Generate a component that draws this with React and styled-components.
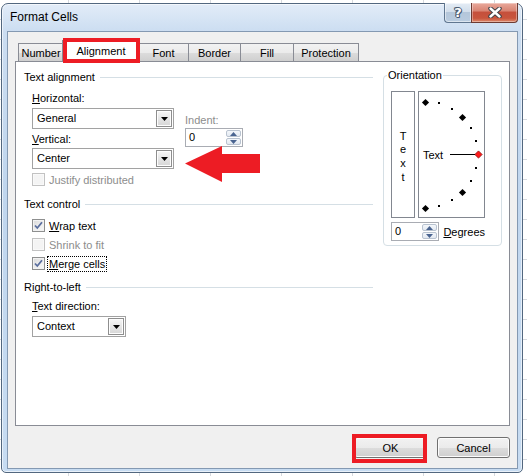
import React from 'react';
import styled, { createGlobalStyle } from 'styled-components';

const tabs = [
  { label: 'Number', width: 46 },
  { label: 'Alignment', width: 78, active: true },
  { label: 'Font', width: 51 },
  { label: 'Border', width: 53 },
  { label: 'Fill', width: 54 },
  { label: 'Protection', width: 66 },
];

// dial marks, angle in degrees from the horizontal
const SMALL_MARKS = [75, 60, 30, 15, -15, -30, -60, -75];
const BIG_MARKS = [90, 45, -45, -90];

const dialPoint = (deg) => {
  const r = (deg * Math.PI) / 180;
  return [6 + 53 * Math.cos(r), 62.5 - 53 * Math.sin(r)];
};

const diamond = (x, y, s) => `${x},${y - s} ${x + s},${y} ${x},${y + s} ${x - s},${y}`;

const Combo = ({ width, value }) => (
  <ComboBox $width={width}>
    <ComboValue>{value}</ComboValue>
    <DropButton>
      <svg width="7" height="4" viewBox="0 0 7 4">
        <path d="M0 0h7L3.5 4z" fill="#000" />
      </svg>
    </DropButton>
  </ComboBox>
);

const Spin = ({ width, value }) => (
  <SpinBox $width={width}>
    <SpinValue>{value}</SpinValue>
    <SpinButtons>
      <SpinButton>
        <svg width="7" height="4" viewBox="0 0 7 4">
          <path d="M0 4h7L3.5 0z" fill="#4a6490" />
        </svg>
      </SpinButton>
      <SpinButton>
        <svg width="7" height="4" viewBox="0 0 7 4">
          <path d="M0 0h7L3.5 4z" fill="#4a6490" />
        </svg>
      </SpinButton>
    </SpinButtons>
  </SpinBox>
);

const Check = ({ checked, disabled, focused, children }) => (
  <CheckRow $disabled={disabled}>
    <CheckBox $disabled={disabled}>
      {checked && (
        <svg width="11" height="11" viewBox="0 0 11 11">
          <path d="M2 5.5 L4.3 8 L9 2.3" fill="none" stroke="#5a6e9e" strokeWidth="1.8" />
        </svg>
      )}
    </CheckBox>
    <CheckLabel $focused={focused}>{children}</CheckLabel>
  </CheckRow>
);

const App = () => {
  return (
    <>
      <GlobalStyle />
      <Frame>
        <TitleBar>
          <Caption>Format Cells</Caption>
          <CaptionButtons>
            <HelpButton>?</HelpButton>
            <CloseButton>
              <svg width="14" height="11" viewBox="0 0 14 11">
                <path d="M2.5 1.5 L11.5 9.5 M11.5 1.5 L2.5 9.5" stroke="#3b3f46" strokeWidth="4.4" strokeLinecap="round" />
                <path d="M2.5 1.5 L11.5 9.5 M11.5 1.5 L2.5 9.5" stroke="#fff" strokeWidth="2.4" strokeLinecap="round" />
              </svg>
            </CloseButton>
          </CaptionButtons>
        </TitleBar>

        <Client>
          <TabStrip>
            {tabs.map((tab) => (
              <Tab key={tab.label} $width={tab.width} $active={tab.active}>
                {tab.label}
                {tab.active && <TabMark />}
              </Tab>
            ))}
          </TabStrip>

          <Panel>
            <LeftCol>
              <GroupTitle>Text alignment</GroupTitle>
              <AlignRow>
                <AlignStack>
                  <Label>
                    <u>H</u>orizontal:
                  </Label>
                  <Gap $h={3} />
                  <Combo width={142} value="General" />
                  <Gap $h={3} />
                  <Label>
                    <u>V</u>ertical:
                  </Label>
                  <Gap $h={2} />
                  <Combo width={142} value="Center" />
                </AlignStack>
                <IndentStack>
                  <Label $disabled>Indent:</Label>
                  <Gap $h={1} />
                  <Spin width={58} value="0" />
                </IndentStack>
              </AlignRow>
              <Gap $h={1} />
              <Indented>
                <Check disabled>Justify distributed</Check>
              </Indented>

              <Gap $h={8} />
              <GroupTitle>Text control</GroupTitle>
              <Gap $h={5} />
              <Indented>
                <Check checked>
                  <u>W</u>rap text
                </Check>
                <Check disabled>Shrink to fit</Check>
                <Check checked focused>
                  <u>M</u>erge cells
                </Check>
              </Indented>

              <Gap $h={7} />
              <GroupTitle>Right-to-left</GroupTitle>
              <Gap $h={5} />
              <Indented>
                <Label>
                  <u>T</u>ext direction:
                </Label>
                <Gap $h={3} />
                <Combo width={94} value="Context" />
              </Indented>
            </LeftCol>

            <GroupBox>
              <GroupLegend>Orientation</GroupLegend>
              <OrientRow>
                <VerticalText>
                  <span>T</span>
                  <span>e</span>
                  <span>x</span>
                  <span>t</span>
                </VerticalText>
                <Dial>
                  <svg width="65" height="125" viewBox="0 0 65 125">
                    {SMALL_MARKS.map((deg) => {
                      const [x, y] = dialPoint(deg);
                      return <rect key={deg} x={Math.round(x) - 1} y={Math.round(y) - 1} width="2" height="2" fill="#000" />;
                    })}
                    {BIG_MARKS.map((deg) => {
                      const [x, y] = dialPoint(deg);
                      return <polygon key={deg} points={diamond(Math.round(x) + 0.5, Math.round(y) + 0.5, 3.6)} fill="#000" />;
                    })}
                    <polygon points={diamond(59.5, 62.5, 3.6)} fill="#ff1a1a" stroke="#8a0000" strokeWidth="0.8" />
                    <text x="4" y="67" fontFamily="Liberation Sans, Arial, sans-serif" fontSize="11" fill="#000">
                      Text
                    </text>
                    <rect x="31" y="62" width="25" height="1" fill="#000" />
                  </svg>
                </Dial>
              </OrientRow>
              <DegreeRow>
                <Spin width={58} value="0" />
                <Label>
                  <u>D</u>egrees
                </Label>
              </DegreeRow>
            </GroupBox>

            <Arrow width="75" height="36" viewBox="0 0 75 36">
              <polygon points="0,17.5 37,0 37,8 75,8 75,27 37,27 37,36" fill="#ed1c24" />
            </Arrow>
          </Panel>

          <ButtonRow>
            <DialogButton>
              OK
              <ButtonMark />
            </DialogButton>
            <DialogButton>Cancel</DialogButton>
          </ButtonRow>
        </Client>
      </Frame>
    </>
  );
};

const GlobalStyle = createGlobalStyle`
  html, body {
    margin: 0;
    padding: 0;
  }
  body {
    width: 527px;
    height: 476px;
    overflow: hidden;
    font-family: "Liberation Sans", Arial, sans-serif;
    font-size: 11px;
    color: #000;
    background-color: #fff;
    background-image:
      repeating-linear-gradient(90deg, transparent 0, transparent 68px, #d6d9de 68px, #d6d9de 69px, transparent 69px, transparent 71px),
      repeating-linear-gradient(180deg, transparent 0, transparent 19px, #d6d9de 19px, #d6d9de 20px);
  }
`;

const Frame = styled.div`
  box-sizing: border-box;
  width: 522px;
  height: 470px;
  margin: 3px 0 0 1px;
  border: 1px solid #52677f;
  border-radius: 7px 7px 5px 5px;
  background: linear-gradient(180deg, #e2ecf8 0%, #cbddf1 6%, #c0d6ee 40%, #c7dcf2 100%);
  box-shadow: inset 0 0 0 1px rgba(255, 255, 255, 0.6);
  padding: 0 4px 3px 5px;
  display: flex;
  flex-direction: column;
`;

const TitleBar = styled.div`
  display: flex;
  align-items: flex-start;
  height: 27px;
`;

const Caption = styled.div`
  padding: 6px 0 0 3px;
  font-size: 12px;
  line-height: 14px;
  color: #000;
`;

const CaptionButtons = styled.div`
  display: flex;
  margin: -1px 0 0 auto;
`;

const HelpButton = styled.div`
  box-sizing: border-box;
  width: 27px;
  height: 20px;
  border: 1px solid #5f7690;
  border-top: none;
  border-right: none;
  border-radius: 0 0 0 4px;
  background: linear-gradient(180deg, #e4ecf5 0%, #d2deeb 45%, #b4c6da 50%, #b9cce0 100%);
  box-shadow: inset 0 0 0 1px rgba(255, 255, 255, 0.5);
  display: flex;
  justify-content: center;
  align-items: center;
  font-family: "DejaVu Sans", sans-serif;
  font-weight: bold;
  font-size: 13px;
  line-height: 13px;
  color: #fff;
  text-shadow: 1px 0 0 #4c5d72, -1px 0 0 #4c5d72, 0 1px 0 #4c5d72, 0 -1px 0 #4c5d72, 1px 1px 0 #4c5d72, -1px -1px 0 #4c5d72;
`;

const CloseButton = styled.div`
  box-sizing: border-box;
  width: 47px;
  height: 20px;
  border: 1px solid #6d3b33;
  border-top: none;
  border-radius: 0 0 4px 0;
  background: linear-gradient(180deg, #e9a99c 0%, #d98675 40%, #c5503c 50%, #c8553d 80%, #de8a6c 100%);
  box-shadow: inset 0 0 0 1px rgba(255, 255, 255, 0.35);
  display: flex;
  justify-content: center;
  align-items: center;
`;

const Client = styled.div`
  box-sizing: border-box;
  height: 438px;
  border: 1px solid #8499b2;
  background: #f0f0f0;
  padding: 8px 7px 10px;
  display: flex;
  flex-direction: column;
`;

const TabStrip = styled.div`
  display: flex;
  align-items: flex-end;
  height: 21px;
  padding-left: 3px;
  position: relative;
  z-index: 1;
`;

const Tab = styled.div`
  box-sizing: border-box;
  position: relative;
  width: ${({ $width }) => $width}px;
  height: ${({ $active }) => ($active ? 22 : 18)}px;
  margin: ${({ $active }) => ($active ? '0 -1px -1px -2px' : '0 0 0 -1px')};
  border: 1px solid #898c95;
  border-bottom: none;
  background: ${({ $active }) =>
    $active ? '#fff' : 'linear-gradient(180deg, #f2f2f2 0%, #ebebeb 50%, #dddddd 50%, #cfcfcf 100%)'};
  z-index: ${({ $active }) => ($active ? 2 : 1)};
  display: flex;
  justify-content: center;
  align-items: center;
  padding-bottom: ${({ $active }) => ($active ? 2 : 0)}px;
  &:first-child {
    margin-left: 0;
  }
`;

const TabMark = styled.span`
  position: absolute;
  top: -3px;
  left: 0px;
  right: -1px;
  bottom: -1px;
  border: 4px solid #ed1c24;
  pointer-events: none;
`;

const Panel = styled.div`
  box-sizing: border-box;
  position: relative;
  height: 365px;
  background: #fff;
  border: 1px solid #898c95;
  padding: 8px 7px 0 8px;
  display: flex;
  gap: 10px;
`;

const LeftCol = styled.div`
  width: 349px;
  display: flex;
  flex-direction: column;
`;

const GroupTitle = styled.div`
  display: flex;
  align-items: center;
  height: 14px;
  line-height: 14px;
  white-space: nowrap;
  &::after {
    content: '';
    flex: 1;
    height: 1px;
    margin-left: 5px;
    background: #d5dfe5;
  }
`;

const Gap = styled.div`
  height: ${({ $h }) => $h}px;
  flex-shrink: 0;
`;

const Indented = styled.div`
  padding-left: 8px;
  display: flex;
  flex-direction: column;
  align-items: flex-start;
`;

const AlignRow = styled.div`
  display: flex;
  padding-left: 8px;
  margin-top: 7px;
`;

const AlignStack = styled.div`
  display: flex;
  flex-direction: column;
`;

const IndentStack = styled.div`
  display: flex;
  flex-direction: column;
  margin-left: 11px;
  padding-top: 22px;
`;

const Label = styled.div`
  height: 14px;
  line-height: 14px;
  white-space: nowrap;
  color: ${({ $disabled }) => ($disabled ? '#8d8d8d' : '#000')};
  u {
    text-underline-offset: 1px;
  }
`;

const ComboBox = styled.div`
  box-sizing: border-box;
  display: flex;
  width: ${({ $width }) => $width}px;
  height: 21px;
  padding: 1px;
  border: 1px solid #a2a2a2;
  background: #fff;
`;

const ComboValue = styled.div`
  flex: 1;
  padding-left: 3px;
  line-height: 17px;
`;

const DropButton = styled.div`
  box-sizing: border-box;
  width: 16px;
  border: 1px solid #8e8e8e;
  background: linear-gradient(180deg, #f6f6f6 0%, #e6e6e6 50%, #d6d6d6 100%);
  box-shadow: inset 0 0 0 1px #fdfdfd;
  display: flex;
  justify-content: center;
  align-items: center;
`;

const SpinBox = styled.div`
  box-sizing: border-box;
  display: flex;
  width: ${({ $width }) => $width}px;
  height: 19px;
  border: 1px solid #a9acb3;
  background: #fff;
`;

const SpinValue = styled.div`
  flex: 1;
  padding-left: 3px;
  line-height: 17px;
`;

const SpinButtons = styled.div`
  width: 15px;
  display: flex;
  flex-direction: column;
  gap: 1px;
  padding: 1px 1px 1px 0;
`;

const SpinButton = styled.div`
  flex: 1;
  box-sizing: border-box;
  border: 1px solid #b9c3d0;
  border-radius: 2px;
  background: linear-gradient(180deg, #f4f7fb 0%, #e3e9f1 100%);
  display: flex;
  justify-content: center;
  align-items: center;
`;

const CheckRow = styled.div`
  display: flex;
  align-items: center;
  height: 19px;
  color: ${({ $disabled }) => ($disabled ? '#8d8d8d' : '#000')};
`;

const CheckBox = styled.div`
  box-sizing: border-box;
  width: 13px;
  height: 13px;
  border: 1px solid ${({ $disabled }) => ($disabled ? '#c2c2c2' : '#8e8f8f')};
  background: ${({ $disabled }) =>
    $disabled ? '#f4f4f4' : 'linear-gradient(135deg, #d8d8d8 0%, #ececec 50%, #f8f8f8 100%)'};
  box-shadow: inset 0 0 0 1px ${({ $disabled }) => ($disabled ? '#f9f9f9' : '#f2f2f2')};
  display: flex;
  justify-content: center;
  align-items: center;
`;

const CheckLabel = styled.span`
  margin-left: 2px;
  padding: 0 1px;
  line-height: 14px;
  border: 1px dotted ${({ $focused }) => ($focused ? '#000' : 'transparent')};
  white-space: nowrap;
`;

const GroupBox = styled.div`
  box-sizing: border-box;
  position: relative;
  align-self: flex-start;
  width: 119px;
  margin-top: 5px;
  padding: 15px 16px 4px 7px;
  border: 1px solid #d5dfe5;
  border-radius: 4px;
`;

const GroupLegend = styled.span`
  position: absolute;
  top: -8px;
  left: 3px;
  padding: 0 1px;
  line-height: 14px;
  background: #fff;
`;

const OrientRow = styled.div`
  display: flex;
  gap: 3px;
  height: 127px;
`;

const VerticalText = styled.div`
  box-sizing: border-box;
  width: 24px;
  border: 1px solid #828790;
  display: flex;
  flex-direction: column;
  justify-content: center;
  align-items: center;
  padding-top: 5px;
  line-height: 13.7px;
`;

const Dial = styled.div`
  box-sizing: border-box;
  width: 67px;
  border: 1px solid #828790;
  svg {
    display: block;
  }
`;

const DegreeRow = styled.div`
  display: flex;
  align-items: center;
  gap: 4px;
  margin-top: 4px;
`;

const Arrow = styled.svg`
  position: absolute;
  left: 169px;
  top: 84px;
`;

const ButtonRow = styled.div`
  display: flex;
  justify-content: flex-end;
  gap: 10px;
  margin-top: 11px;
`;

const DialogButton = styled.div`
  box-sizing: border-box;
  position: relative;
  width: 73px;
  height: 21px;
  border: 1px solid #707070;
  border-radius: 3px;
  background: linear-gradient(180deg, #f2f2f2 0%, #ebebeb 50%, #dddddd 50%, #cfcfcf 100%);
  box-shadow: inset 0 0 0 1px #fcfcfc;
  display: flex;
  justify-content: center;
  align-items: center;
  line-height: 14px;
`;

const ButtonMark = styled.span`
  position: absolute;
  top: -4px;
  left: -3px;
  right: -1px;
  bottom: -6px;
  border: 4px solid #ed1c24;
  pointer-events: none;
`;

export default App;
